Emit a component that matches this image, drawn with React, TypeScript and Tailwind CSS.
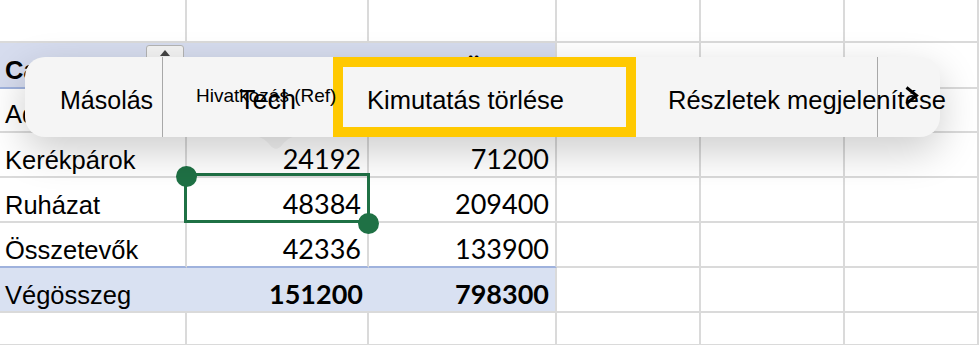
import React from "react";

const LABEL = { fontFamily: '"Liberation Sans", Arial, sans-serif' } as const;
const NUM = { fontFamily: 'Lato, "Liberation Sans", sans-serif' } as const;

type Cell = {
  text?: string;
  kind?: "label" | "num" | "head";
  bold?: boolean;
  bg?: string;
  noRight?: boolean;
  bottomBlue?: boolean;
};

const colW = [187, 182, 188, 144, 144, 134];
const rowH = [43, 46, 44, 45, 45, 45, 45, 33];

const HEAD_BG = "bg-[#d6dcee]";
const TOT_BG = "bg-[#d9e1f2]";

function Row({ h, cells, pbLabel, pbNum }: { h: number; cells: Cell[]; pbLabel: string; pbNum: string }) {
  return (
    <div className="flex" style={{ height: h }}>
      {colW.map((w, i) => {
        const c = cells[i] || {};
        const right = c.noRight ? "" : "border-r-2";
        const bottom = c.bottomBlue ? "border-[#9fb2dd]" : "border-[#dadada]";
        const isNum = c.kind === "num";
        return (
          <div
            key={i}
            className={`relative box-border flex items-end border-b-2 ${right} ${bottom} ${c.bg || "bg-white"} ${
              isNum ? "justify-end pr-[6px]" : "pl-[5px]"
            } ${isNum ? pbNum : pbLabel}`}
            style={{ width: w, borderRightColor: "#dadada" }}
          >
            {c.text && (
              <span
                className={`whitespace-nowrap text-black ${isNum ? "text-[27px] leading-[28px]" : "text-[25.5px] leading-[28px]"} ${
                  c.bold ? "font-bold" : "font-normal"
                }`}
                style={isNum ? NUM : LABEL}
              >
                {c.text}
              </span>
            )}
          </div>
        );
      })}
    </div>
  );
}

export default function App() {
  return (
    <div className="relative h-[345px] w-[979px] overflow-hidden bg-white">
      {/* grid */}
      <div className="flex flex-col">
        <Row h={rowH[0]} cells={[]} pbLabel="pb-[2px]" pbNum="pb-[3.5px]" />
        <Row
          h={rowH[1]}
          pbLabel="pb-[3px]"
          pbNum="pb-[3.5px]"
          cells={[
            { text: "Category", bold: true, bg: HEAD_BG, noRight: true, bottomBlue: true },
            { text: "Tech", bg: HEAD_BG, noRight: true, bottomBlue: true, kind: "num", bold: true },
            { text: "Összeg", bg: HEAD_BG, bottomBlue: true, kind: "num", bold: true },
          ]}
        />
        <Row h={rowH[2]} pbLabel="pb-[3px]" pbNum="pb-[3.5px]" cells={[{ text: "Adatok" }]} />
        <Row
          h={rowH[3]}
          pbLabel="pb-[2px]"
          pbNum="pb-[3.5px]"
          cells={[{ text: "Kerékpárok" }, { text: "24192", kind: "num" }, { text: "71200", kind: "num" }]}
        />
        <Row
          h={rowH[4]}
          pbLabel="pb-[2px]"
          pbNum="pb-[3.5px]"
          cells={[{ text: "Ruházat" }, { text: "48384", kind: "num" }, { text: "209400", kind: "num" }]}
        />
        <Row
          h={rowH[5]}
          pbLabel="pb-[2px]"
          pbNum="pb-[3.5px]"
          cells={[
            { text: "Összetevők", bottomBlue: true },
            { text: "42336", kind: "num", bottomBlue: true },
            { text: "133900", kind: "num", bottomBlue: true },
          ]}
        />
        <Row
          h={rowH[6]}
          pbLabel="pb-[2px]"
          pbNum="pb-[3.5px]"
          cells={[
            { text: "Végösszeg", bg: TOT_BG, noRight: true },
            { text: "151200", kind: "num", bold: true, bg: TOT_BG, noRight: true },
            { text: "798300", kind: "num", bold: true, bg: TOT_BG },
          ]}
        />
        <Row h={rowH[7]} cells={[]} pbLabel="pb-[2px]" pbNum="pb-[3.5px]" />
      </div>

      {/* filter dropdown button in header cell */}
      <div className="absolute left-[146px] top-[45px] flex h-[24px] w-[38px] justify-center rounded-[3px] border border-[#b4b4b4] bg-[#f3f3f3] pt-[4px]">
        <svg width="10" height="6" viewBox="0 0 10 6">
          <path d="M5 0 L10 6 L0 6 Z" fill="#444" />
        </svg>
      </div>

      {/* selection */}
      <div className="absolute left-[184px] top-[173px] h-[50px] w-[186px] border-[3px] border-[#1f7145]" />
      <div className="absolute left-[176px] top-[166px] h-[21px] w-[21px] rounded-full bg-[#1f7145]" />
      <div className="absolute left-[358px] top-[213px] h-[21px] w-[21px] rounded-full bg-[#1f7145]" />

      {/* popup tail */}
      <svg className="absolute left-[250px] top-[136px]" width="52" height="15" viewBox="0 0 52 15">
        <path d="M0 0 C10 0 14 2 20 9 C24 14 28 14 32 9 C38 2 42 0 52 0 Z" fill="#f5f5f5" />
      </svg>

      {/* popup menu */}
      <div
        className="absolute left-[25px] top-[57px] flex h-[80px] w-[915px] rounded-[20px] bg-[#f5f5f5] text-black shadow-[0_14px_40px_rgba(0,0,0,0.2)]"
        style={LABEL}
      >
        <div className="flex h-full w-[137px] items-center pl-[35px] pt-[5px]">
          <span className="whitespace-nowrap text-[25px] leading-[28px]">Másolás</span>
        </div>
        <div className="h-full w-px bg-[#a8a8a8]" />
        <div className="relative h-full w-[170px] pl-[33px] pt-[28px]">
          <span className="whitespace-nowrap text-[19px] leading-[22px]">Hivatkozás (Ref)</span>
          <span className="absolute left-[76px] top-[28px] whitespace-nowrap text-[27px] leading-[30px]">Tech</span>
        </div>
        <div className="box-border flex h-full w-[303px] items-center border-[10px] border-[#ffc900] bg-[#f5f5f5] pl-[24px] pt-[5px]">
          <span className="whitespace-nowrap text-[25.5px] leading-[28px]">Kimutatás törlése</span>
        </div>
        <div className="flex h-full w-[241px] items-center pl-[32px] pt-[5px]">
          <span className="relative z-10 whitespace-nowrap text-[25.5px] leading-[28px]">Részletek megjelenítése</span>
        </div>
        <div className="h-full w-px bg-[#a8a8a8]" />
        <div className="relative flex h-full flex-1 items-start pl-[26px] pt-[29px]">
          <svg width="15" height="19" viewBox="0 0 15 19" className="relative z-20">
            <path d="M2.5 1.5 L12.5 9.5 L2.5 17.5" fill="none" stroke="#000" strokeWidth="3" strokeLinejoin="miter" />
          </svg>
        </div>
      </div>
    </div>
  );
}
